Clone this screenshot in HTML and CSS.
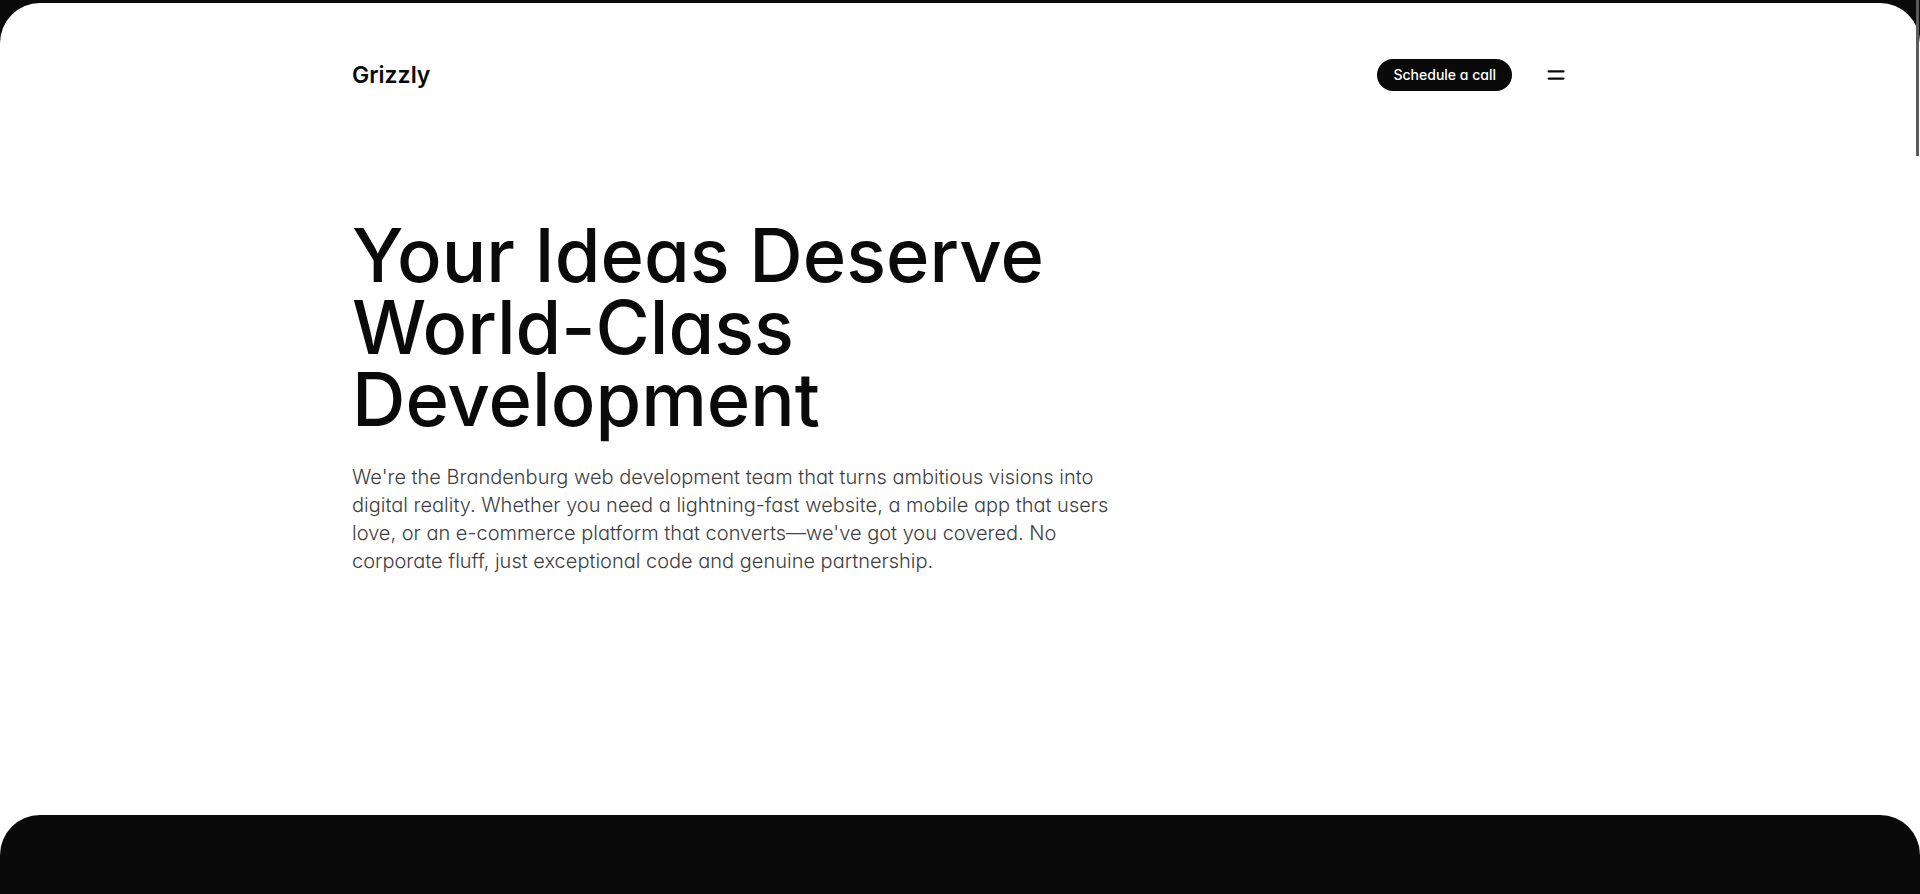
FILE: index.html
```html
<!DOCTYPE html>
<html lang="en">
<head>
<meta charset="utf-8">
<meta name="viewport" content="width=device-width, initial-scale=1">
<title>Grizzly</title>
<link rel="stylesheet" href="styles.css">
</head>
<body>
<div class="page">
  <div class="sheet">
    <header class="container header">
      <a class="logo" href="#">Grizzly</a>
      <div class="actions">
        <button class="cta" type="button">Schedule a call</button>
        <button class="menu" type="button" aria-label="Open menu">
          <svg width="24" height="24" viewBox="0 0 24 24" fill="none" stroke="#0a0a0a" stroke-width="2.2" stroke-linecap="round" aria-hidden="true"><path d="M4.7 8.4H19.5M4.7 15.6H19.5"/></svg>
        </button>
      </div>
    </header>
    <main class="container hero">
      <h1 class="title">Your Ideas Deserve<br>World-Class<br>Development</h1>
      <p class="lead">We're the Brandenburg web development team that turns ambitious visions into<br>digital reality. Whether you need a lightning-fast website, a mobile app that users<br>love, or an e-commerce platform that converts—we've got you covered. No<br>corporate fluff, just exceptional code and genuine partnership.</p>
    </main>
    <section class="band"></section>
  </div>
  <div class="scroll-thumb"></div>
</div>
</body>
</html>
```
FILE: styles.css
```css
* { box-sizing: border-box; }
body {
  margin: 0;
  background: #0a0a0a;
  color: #0a0a0a;
  font-family: Inter, "Liberation Sans", sans-serif;
  font-feature-settings: "cv11";
}
.page { display: flex; flex-direction: column; min-height: 100vh; padding-top: 3px; overflow: hidden; }
.sheet { display: flex; flex-direction: column; flex: 1; background: #fff; border-radius: 40px 40px 0 0; }
.container { width: 100%; max-width: 1280px; margin: 0 auto; padding: 0 32px; }
.header { display: flex; align-items: center; justify-content: space-between; padding-top: 56px; }
.logo { font-size: 23px; line-height: 32px; font-weight: 600; color: inherit; text-decoration: none; }
.actions { display: flex; align-items: center; gap: 32px; }
.cta {
  height: 32px; padding: 0 16px; border: 0; border-radius: 16px;
  background: #0a0a0a; color: #fff; font: inherit; font-size: 14px; font-weight: 500; line-height: 20px;
}
.menu { display: flex; padding: 0; border: 0; background: none; }
.hero { padding-top: 128px; padding-bottom: 240px; }
.title { margin: 0; font-size: 74px; line-height: 72px; font-weight: 500; }
.lead { margin: 28px 0 0; font-size: 20px; line-height: 28px; font-weight: 300; color: #404040; }
.band { flex: 1; min-height: 79px; background: #0a0a0a; border-radius: 40px 40px 0 0; }
.scroll-thumb { position: absolute; top: 0; right: 1px; width: 3px; height: 156px; background: #5b5b5b; }
```
